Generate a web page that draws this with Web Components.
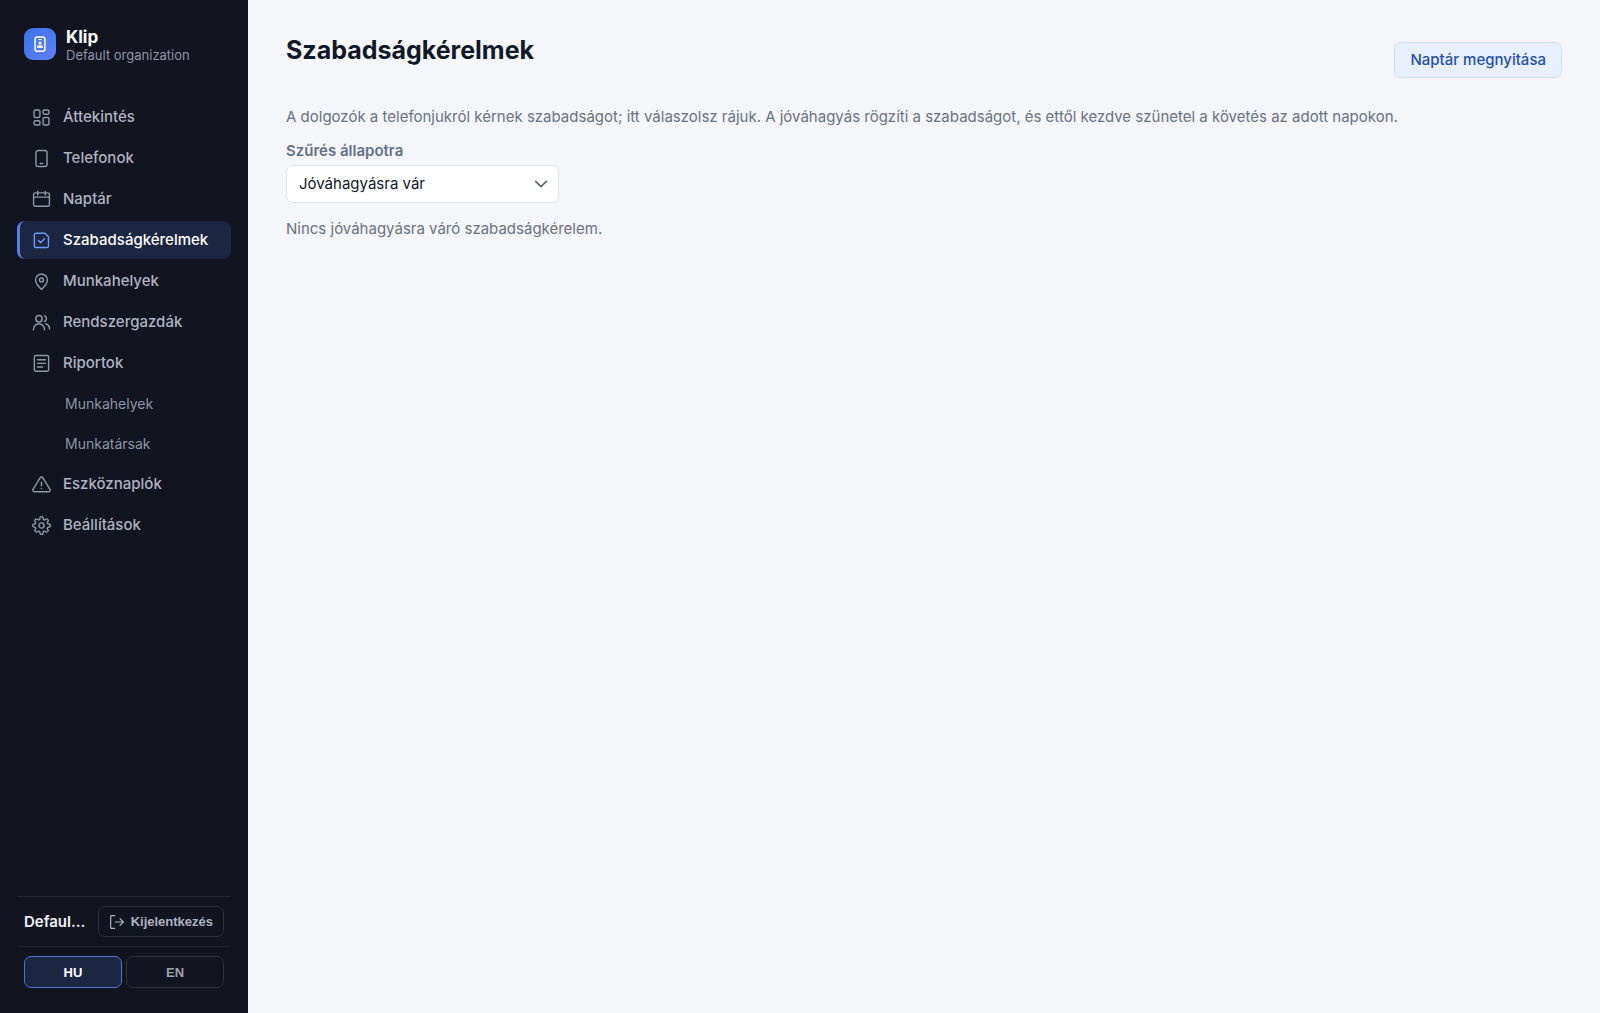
<!DOCTYPE html>
<html lang="hu">
<head>
<meta charset="utf-8">
<title>Szabadságkérelmek – Klip</title>
<style>
html, body { height: 100%; }
body {
  margin: 0;
  font-family: Inter, "Open Sans", sans-serif;
  font-size: 15px;
  line-height: 22px;
  color: #111827;
  background: #f4f6fa;
}
</style>
</head>
<body>

<klip-app>
  <klip-sidebar slot="sidebar">
    <klip-brand slot="brand" name="Klip">Default organization</klip-brand>
    <klip-nav-item icon="grid" href="#attekintes">Áttekintés</klip-nav-item>
    <klip-nav-item icon="phone" href="#telefonok">Telefonok</klip-nav-item>
    <klip-nav-item icon="calendar" href="#naptar">Naptár</klip-nav-item>
    <klip-nav-item icon="request" href="#szabadsagkerelmek" active>Szabadságkérelmek</klip-nav-item>
    <klip-nav-item icon="pin" href="#munkahelyek">Munkahelyek</klip-nav-item>
    <klip-nav-item icon="users" href="#rendszergazdak">Rendszergazdák</klip-nav-item>
    <klip-nav-item icon="report" href="#riportok">Riportok</klip-nav-item>
    <klip-nav-item sub href="#riportok-munkahelyek">Munkahelyek</klip-nav-item>
    <klip-nav-item sub href="#riportok-munkatarsak">Munkatársak</klip-nav-item>
    <klip-nav-item icon="alert" href="#eszkoznaplok">Eszköznaplók</klip-nav-item>
    <klip-nav-item icon="gear" href="#beallitasok">Beállítások</klip-nav-item>
    <klip-account slot="footer">Defaul…</klip-account>
    <klip-lang slot="footer" value="HU"></klip-lang>
  </klip-sidebar>

  <klip-page-header>
    Szabadságkérelmek
    <klip-link-button slot="action" href="#naptar">Naptár megnyitása</klip-link-button>
  </klip-page-header>
  <klip-note>A dolgozók a telefonjukról kérnek szabadságot; itt válaszolsz rájuk. A jóváhagyás rögzíti a szabadságot, és ettől kezdve szünetel a követés az adott napokon.</klip-note>
  <klip-filter label="Szűrés állapotra" options="Jóváhagyásra vár"></klip-filter>
  <klip-note>Nincs jóváhagyásra váró szabadságkérelem.</klip-note>
</klip-app>

<script>
(function() {

const icons = {
  badge: '<rect x="5.500" y="2.500" width="13" height="19" rx="2.500" stroke-width="2"/><path d="M10.500 6h3" stroke-width="1.400"/><circle cx="12" cy="10.600" r="2" fill="currentColor" stroke="none"/><path d="M8.200 17.400v-1.400a2.600 2.600 0 0 1 2.600-2.600h2.400a2.600 2.600 0 0 1 2.600 2.600v1.400z" fill="currentColor" stroke="none"/>',
  grid: '<rect x="2.600" y="2.600" width="7.400" height="9.400" rx="1.600"/><rect x="14" y="2.600" width="7.400" height="5.400" rx="1.600"/><rect x="2.600" y="16" width="7.400" height="5.400" rx="1.600"/><rect x="14" y="12" width="7.400" height="9.400" rx="1.600"/>',
  phone: '<rect x="5" y="2" width="14" height="20" rx="2.800"/><path d="M10.500 18.400h3"/>',
  calendar: '<rect x="2" y="3.600" width="20" height="17" rx="2"/><path d="M7.200 1.500v4.800M16.800 1.500v4.800M2 9h20"/>',
  request: '<path d="M5 2.800h11.400l4.400 4.400V18.800a2 2 0 0 1-2 2H5a2 2 0 0 1-2-2V4.800a2 2 0 0 1 2-2z"/><path d="M8.200 12l2.800 2.700 4.800-5"/>',
  pin: '<path d="M19.500 10c0 5-7.500 12-7.500 12S4.500 15 4.500 10a7.500 7.500 0 0 1 15 0z"/><circle cx="12" cy="10" r="2.500"/>',
  users: '<circle cx="8.800" cy="7.200" r="4"/><path d="M1.800 21.200a7 7.600 0 0 1 14 0"/><path d="M15.600 3.400a3.900 3.900 0 0 1 0 7.400M17.400 13.600a7 7 0 0 1 4.800 6.600"/>',
  report: '<rect x="3" y="1.800" width="18" height="20" rx="2"/><path d="M7 7.200h10M7 11.800h10M7 16.400h6.500"/>',
  alert: '<path d="M10.200 3.500L1.300 18.200A2 2 0 0 0 3 21.200h18a2 2 0 0 0 1.700-3L13.800 3.500a2.100 2.100 0 0 0-3.600 0z"/><path d="M12 9v4.500M12 17v.2"/>',
  gear: '<circle cx="12" cy="12" r="3.300"/><path d="M10 3.200V2.800a2 2 0 0 1 4 0v.4a1.700 1.700 0 0 0 2.900 1.200l.3-.3a2 2 0 0 1 2.800 2.800l-.3.300A1.700 1.700 0 0 0 20.800 10h.4a2 2 0 0 1 0 4h-.4a1.700 1.700 0 0 0-1.100 2.800l.3.300a2 2 0 0 1-2.800 2.800l-.3-.3A1.700 1.700 0 0 0 14 20.800v.4a2 2 0 0 1-4 0v-.4a1.700 1.700 0 0 0-2.900-1.200l-.3.300a2 2 0 0 1-2.800-2.800l.3-.3A1.700 1.700 0 0 0 3.200 14h-.4a2 2 0 0 1 0-4h.4a1.700 1.700 0 0 0 1.100-2.800L4 6.900a2 2 0 0 1 2.800-2.800l.3.300A1.700 1.700 0 0 0 10 3.200z"/>',
  logout: '<path d="M8.500 21.500H3.500a1 1 0 0 1-1-1V3.500a1 1 0 0 1 1-1h5M16.500 17l5-5-5-5M21 12H9.500"/>',
  chevron: '<path d="M4 8l8 8 8-8" stroke-width="2.400"/>'
};

function icon(name) {
  return '<svg viewBox="0 0 24 24" fill="none" stroke="currentColor" stroke-width="1.800" stroke-linecap="round" stroke-linejoin="round" aria-hidden="true">' + icons[name] + '</svg>';
}

// registers an element whose shadow root is built from render(elem)
function define(name, render) {
  customElements.define(name, class extends HTMLElement {
    constructor() {
      super();
      const template = document.createElement('template');
      template.innerHTML = render(this);
      this.attachShadow({mode: 'open'}).appendChild(template.content.cloneNode(true));
    }
  });
}

define('klip-app', () => `<style>
:host { display: flex; min-height: 100vh; }
main { flex: 1; min-width: 0; padding: 33px 38px; display: flex; flex-direction: column; }
</style>
<slot name="sidebar"></slot>
<main><slot></slot></main>`);

define('klip-sidebar', () => `<style>
:host {
  display: flex; flex-direction: column; flex: none;
  box-sizing: border-box; width: 248px; padding: 28px 17px 25px;
  background: #12141f; color: #aeb3c1;
}
nav { display: flex; flex-direction: column; gap: 3px; flex: 1; margin-top: 34px; }
</style>
<slot name="brand"></slot>
<nav aria-label="Főmenü"><slot></slot></nav>
<slot name="footer"></slot>`);

define('klip-brand', elem => `<style>
:host { display: flex; align-items: flex-start; gap: 10px; padding: 0 7px; }
.logo {
  display: flex; align-items: center; justify-content: center;
  width: 32px; height: 32px; border-radius: 9px;
  background: linear-gradient(135deg, #3b74e8, #5f80f8); color: #fff;
}
svg { width: 18px; height: 18px; }
.text { display: flex; flex-direction: column; }
strong { font-size: 17px; line-height: 18px; font-weight: 700; color: #fff; }
small { font-size: 13px; line-height: 18px; color: #8d93a3; }
</style>
<span class="logo">${icon('badge')}</span>
<span class="text"><strong>${elem.getAttribute('name')}</strong><small><slot></slot></small></span>`);

define('klip-nav-item', elem => `<style>
:host { display: block; }
a {
  display: flex; align-items: center; gap: 12px;
  box-sizing: border-box; height: 38px; padding: 0 12px;
  border-left: 3px solid transparent; border-radius: 8px;
  font-size: 15px; font-weight: 500; color: inherit; text-decoration: none;
}
svg { flex: none; width: 19px; height: 19px; color: #9196a5; }
:host([active]) a { background: #1c2641; border-left-color: #4f83ee; color: #fff; }
:host([active]) svg { color: #6b9bfa; }
:host([sub]) a { height: 37px; padding-left: 45px; font-size: 14px; font-weight: 400; color: #8d93a3; }
</style>
<a href="${elem.getAttribute('href')}"${elem.hasAttribute('active') ? ' aria-current="page"' : ''}>${elem.hasAttribute('icon') ? icon(elem.getAttribute('icon')) : ''}<slot></slot></a>`);

define('klip-account', () => `<style>
:host {
  display: flex; align-items: center; gap: 8px;
  padding: 9px 7px; border-top: 1px solid #242732;
}
.name { flex: 1; min-width: 0; overflow: hidden; white-space: nowrap; text-overflow: ellipsis; font-weight: 600; color: #f1f3f8; }
button {
  display: flex; align-items: center; gap: 6px;
  box-sizing: border-box; height: 31px; padding: 0 10px;
  border: 1px solid #2f323e; border-radius: 7px; background: none;
  font: 700 13px "Liberation Sans", Arial, sans-serif; color: #aeb3c1; cursor: pointer;
}
svg { width: 16px; height: 16px; }
</style>
<span class="name"><slot></slot></span>
<button type="button">${icon('logout')}Kijelentkezés</button>`);

define('klip-lang', elem => `<style>
:host { display: flex; gap: 4px; padding: 9px 7px 0; border-top: 1px solid #242732; }
button {
  flex: 1; box-sizing: border-box; height: 32px; padding: 0;
  border: 1px solid #2f323e; border-radius: 7px; background: none;
  font: 700 13px "Liberation Sans", Arial, sans-serif; color: #9ca1b0; cursor: pointer;
}
button[aria-pressed="true"] { background: #1c2641; border-color: #4a74cf; color: #fff; }
</style>
${['HU', 'EN'].map(l => `<button type="button" aria-pressed="${l === elem.getAttribute('value')}">${l}</button>`).join('')}`);

define('klip-page-header', () => `<style>
:host { display: flex; align-items: center; justify-content: space-between; margin-bottom: 19px; }
h1 { margin: 0 0 20px; font-size: 25px; line-height: 34px; font-weight: 700; }
</style>
<h1><slot></slot></h1>
<slot name="action"></slot>`);

define('klip-link-button', elem => `<style>
:host { display: block; }
a {
  display: block; padding: 6px 15px; border: 1px solid #cddcfa; border-radius: 7px;
  background: #e8effd; color: #1e4fb4; font-weight: 500; text-decoration: none;
}
</style>
<a href="${elem.getAttribute('href')}"><slot></slot></a>`);

define('klip-note', () => `<style>
:host { display: block; color: #6b7280; }
p { margin: 0; }
</style>
<p><slot></slot></p>`);

define('klip-filter', elem => `<style>
:host { display: flex; flex-direction: column; gap: 3px; width: 273px; margin: 12px 0 15px; }
label { font-weight: 600; color: #667089; }
.box { display: grid; align-items: center; }
select, svg { grid-area: 1 / 1; }
select {
  appearance: none; width: 100%; height: 38px; padding: 0 36px 0 12px;
  border: 1px solid #dfe3ea; border-radius: 7px; background: #fff;
  font: inherit; color: #111827;
}
svg { justify-self: end; width: 16px; height: 16px; margin-right: 10px; color: #5b6475; pointer-events: none; }
</style>
<label for="state">${elem.getAttribute('label')}</label>
<div class="box">
  <select id="state">${elem.getAttribute('options').split('|').map(o => `<option>${o}</option>`).join('')}</select>
  ${icon('chevron')}
</div>`);

})();
</script>
</body>
</html>
